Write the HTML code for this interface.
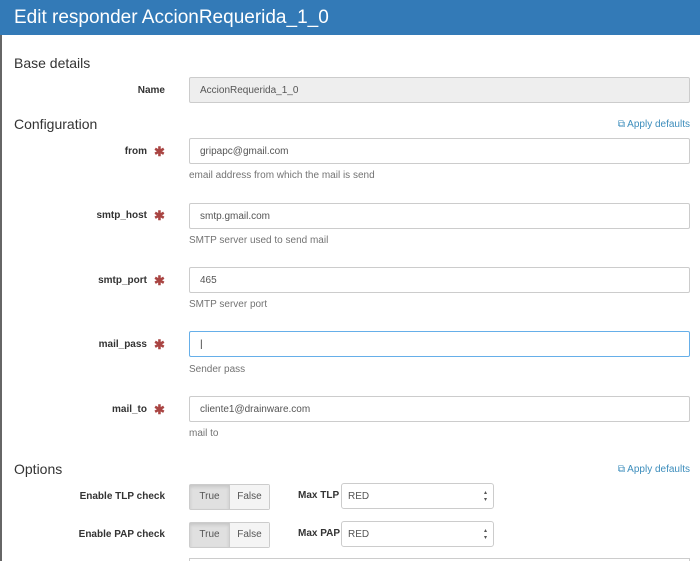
<!DOCTYPE html>
<html><head><style>
html,body{margin:0;width:700px;height:561px;overflow:hidden}
body{background:#fff;font-family:"Liberation Sans",sans-serif;position:relative;color:#333}
.a{position:absolute}
.hdr{left:0;top:0;width:700px;height:35px;background:#337ab7;color:#fff;font-size:19px;line-height:36px;padding-left:14px;box-sizing:border-box}
.lb{position:absolute;left:0;top:35px;width:2px;height:526px;background:#666}
h3{position:absolute;margin:0;font-weight:normal;font-size:14px;left:14px;color:#333}
.lab{position:absolute;width:147px;text-align:right;font-weight:bold;font-size:10px;left:0}
.ast{position:absolute;left:154px;color:#a94442;font-size:13px;font-weight:bold}
.in{position:absolute;left:189px;width:501px;height:26px;border:1px solid #ccc;box-sizing:border-box;border-radius:2px;font-size:10px;line-height:26px;padding-left:10px;color:#555}
.help{position:absolute;left:189px;font-size:10px;color:#737373}
.ad{position:absolute;right:10px;font-size:10px;color:#3c8dbc}
.tg{position:absolute;left:189px;width:81px;height:26px;border:1px solid #ccc;box-sizing:border-box;border-radius:2px;display:flex;font-size:10px;line-height:24px;color:#555}
.tg span{flex:1;text-align:center;background:#f4f4f4}
.tg span:first-child{background:#e0e0e0;border-right:1px solid #ccc;box-shadow:inset 0 2px 3px rgba(0,0,0,.12)}
.sel{position:absolute;left:341px;width:153px;height:26px;border:1px solid #ccc;box-sizing:border-box;border-radius:3px;font-size:10px;line-height:26px;padding-left:6px;color:#555}
.sel:after{content:"▴\A▾";white-space:pre;position:absolute;right:6px;top:6px;font-size:6px;line-height:7px;color:#555}
</style></head><body>
<div class="a hdr">Edit responder AccionRequerida_1_0</div>
<div class="lb"></div>
<h3 style="top:55px">Base details</h3>
<div class="lab" style="top:85px;width:165px">Name</div>
<div class="in" style="top:77px;background:#eee">AccionRequerida_1_0</div>
<h3 style="top:116px">Configuration</h3>
<div class="ad" style="top:119px">⧉ Apply defaults</div>

<div class="lab" style="top:146px">from</div><div class="ast" style="top:144px">✱</div>
<div class="in" style="top:138px">gripapc@gmail.com</div>
<div class="help" style="top:170px">email address from which the mail is send</div>

<div class="lab" style="top:210px">smtp_host</div><div class="ast" style="top:208px">✱</div>
<div class="in" style="top:203px">smtp.gmail.com</div>
<div class="help" style="top:235px">SMTP server used to send mail</div>

<div class="lab" style="top:275px">smtp_port</div><div class="ast" style="top:273px">✱</div>
<div class="in" style="top:267px">465</div>
<div class="help" style="top:299px">SMTP server port</div>

<div class="lab" style="top:339px">mail_pass</div><div class="ast" style="top:337px">✱</div>
<div class="in" style="top:331px;border-color:#66afe9;color:#333">|</div>
<div class="help" style="top:364px">Sender pass</div>

<div class="lab" style="top:404px">mail_to</div><div class="ast" style="top:402px">✱</div>
<div class="in" style="top:396px">cliente1@drainware.com</div>
<div class="help" style="top:428px">mail to</div>

<h3 style="top:461px">Options</h3>
<div class="ad" style="top:464px">⧉ Apply defaults</div>

<div class="lab" style="top:491px;width:165px">Enable TLP check</div>
<div class="tg" style="top:484px"><span>True</span><span>False</span></div>
<div class="a" style="left:298px;top:490px;font-size:10px;font-weight:bold">Max TLP</div>
<div class="sel" style="top:483px">RED</div>

<div class="lab" style="top:529px;width:165px">Enable PAP check</div>
<div class="tg" style="top:522px"><span>True</span><span>False</span></div>
<div class="a" style="left:298px;top:528px;font-size:10px;font-weight:bold">Max PAP</div>
<div class="sel" style="top:521px">RED</div>

<div class="a" style="left:189px;top:558px;width:501px;height:3px;border-top:1px solid #ccc;border-left:1px solid #ccc;border-right:1px solid #ccc;box-sizing:border-box"></div>
</body></html>
